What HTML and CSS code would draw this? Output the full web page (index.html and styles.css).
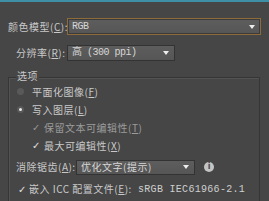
FILE: index.html
```html
<!DOCTYPE html>
<html>
<head>
<meta charset="utf-8">
<link rel="stylesheet" href="styles.css">
</head>
<body>
<div class="topbar"></div>
<div class="panel">
  <div class="row row1">
    <span class="label l1">颜色模型(<u>C</u>):</span>
    <div class="select wide focus"><span class="val">RGB</span><span class="arrow"></span></div>
  </div>
  <div class="row row2">
    <span class="label l2">分辨率(<u>R</u>):</span>
    <div class="select mid"><span class="val">高 (300 ppi)</span><span class="arrow"></span></div>
  </div>
  <div class="group">
    <span class="legend">选项</span>
    <div class="opt"><span class="radio"></span><span>平面化图像(<u>F</u>)</span></div>
    <div class="opt"><span class="radio on"></span><span>写入图层(<u>L</u>)</span></div>
    <div class="opt sub dis"><span class="check">✓</span><span>保留文本可编辑性(<u>T</u>)</span></div>
    <div class="opt sub"><span class="check">✓</span><span>最大可编辑性(<u>X</u>)</span></div>
    <div class="row row3">
      <span class="label l3">消除锯齿(<u>A</u>):</span>
      <div class="select aa"><span class="val">优化文字(提示)</span><span class="arrow"></span></div>
      <span class="info">i</span>
    </div>
    <div class="row row4">
      <span class="check">✓</span><span class="label l4">嵌入 ICC 配置文件(<u>E</u>):</span>
      <span class="profile">sRGB IEC61966-2.1</span>
    </div>
  </div>
</div>
</body>
</html>
```
FILE: styles.css
```css
html, body { margin: 0; padding: 0; }
body {
  width: 269px; height: 201px; overflow: hidden;
  background: #464646;
  font-family: "Noto Sans CJK SC", "Liberation Sans", sans-serif;
  font-size: 10px; letter-spacing: 0.5px; color: #c9c9c9;
}
u { text-decoration: underline; text-underline-offset: 1px; }
.topbar { height: 2px; background: #3f8fa6; }
.panel { padding: 16px 0 0 0; }
.row { display: flex; align-items: center; }
.label { white-space: nowrap; line-height: 14px; }
.row1 { padding-left: 8px; height: 17px; }
.l1 { width: 59px; }
.row2 { padding-left: 16px; height: 16px; margin-top: 10px; }
.l2 { width: 51px; }
.select {
  box-sizing: border-box; display: flex; align-items: center; justify-content: space-between;
  background: linear-gradient(#5d5d5d, #565656);
  border: 1px solid #333333; color: #d6d6d6; padding: 0 5px 0 4px;
}
.select.wide { width: 194px; height: 17px; }
.select.focus { border: 1px solid #8d6b3a; box-shadow: inset 0 0 0 1px #3b3b3b; }
.select.mid { width: 108px; height: 16px; }
.select.aa { width: 119px; height: 15px; }
.val { line-height: 14px; white-space: nowrap; font-family: "Liberation Mono", "Noto Sans CJK SC", monospace; letter-spacing: -0.5px; }
.select.aa .val { font-family: "Noto Sans CJK SC", sans-serif; letter-spacing: 0.5px; }
.arrow { width: 0; height: 0; border-left: 3px solid transparent; border-right: 3px solid transparent; border-top: 4px solid #eeeeee; }
.group {
  position: relative; margin: 16px 9px 0 8px; border: 1px solid #363636; border-bottom: none;
  box-shadow: inset 1px 1px 0 #535353; height: 130px; padding: 4px 0 0 0; box-sizing: border-box;
}
.legend { position: absolute; left: 7px; top: -9px; background: #464646; padding: 0 1px; line-height: 14px; }
.opt { display: flex; align-items: center; height: 18px; padding-left: 8px; white-space: nowrap; }
.opt.sub { padding-left: 23px; }
.opt.dis { color: #9c9c9c; }
.radio { width: 7px; height: 7px; border-radius: 50%; background: #595959; margin-right: 8px; position: relative; }
.radio.on::after { content: ""; position: absolute; left: 2px; top: 2px; width: 3px; height: 3px; border-radius: 50%; background: #e8e8e8; }
.check { width: 9px; font-size: 10px; margin-right: 3px; color: #e0e0e0; font-family: "DejaVu Sans", sans-serif; letter-spacing: 0; }
.opt.dis .check { color: #959595; }
.row3 { padding-left: 7px; margin-top: 5px; height: 16px; }
.l3 { width: 60px; }
.info { margin-left: 9px; width: 10px; height: 10px; border-radius: 50%; background: #c4c4c4; color: #4a4a4a; font-size: 8px; font-weight: bold; line-height: 10px; text-align: center; font-family: "DejaVu Sans", sans-serif; letter-spacing: 0; }
.row4 { padding-left: 9px; margin-top: 6px; height: 16px; }
.row4 .check { margin-right: 2px; }
.l4 { width: 109px; }
.profile { font-family: "Liberation Mono", monospace; font-size: 10px; letter-spacing: 0.3px; color: #cfcfcf; }
```
